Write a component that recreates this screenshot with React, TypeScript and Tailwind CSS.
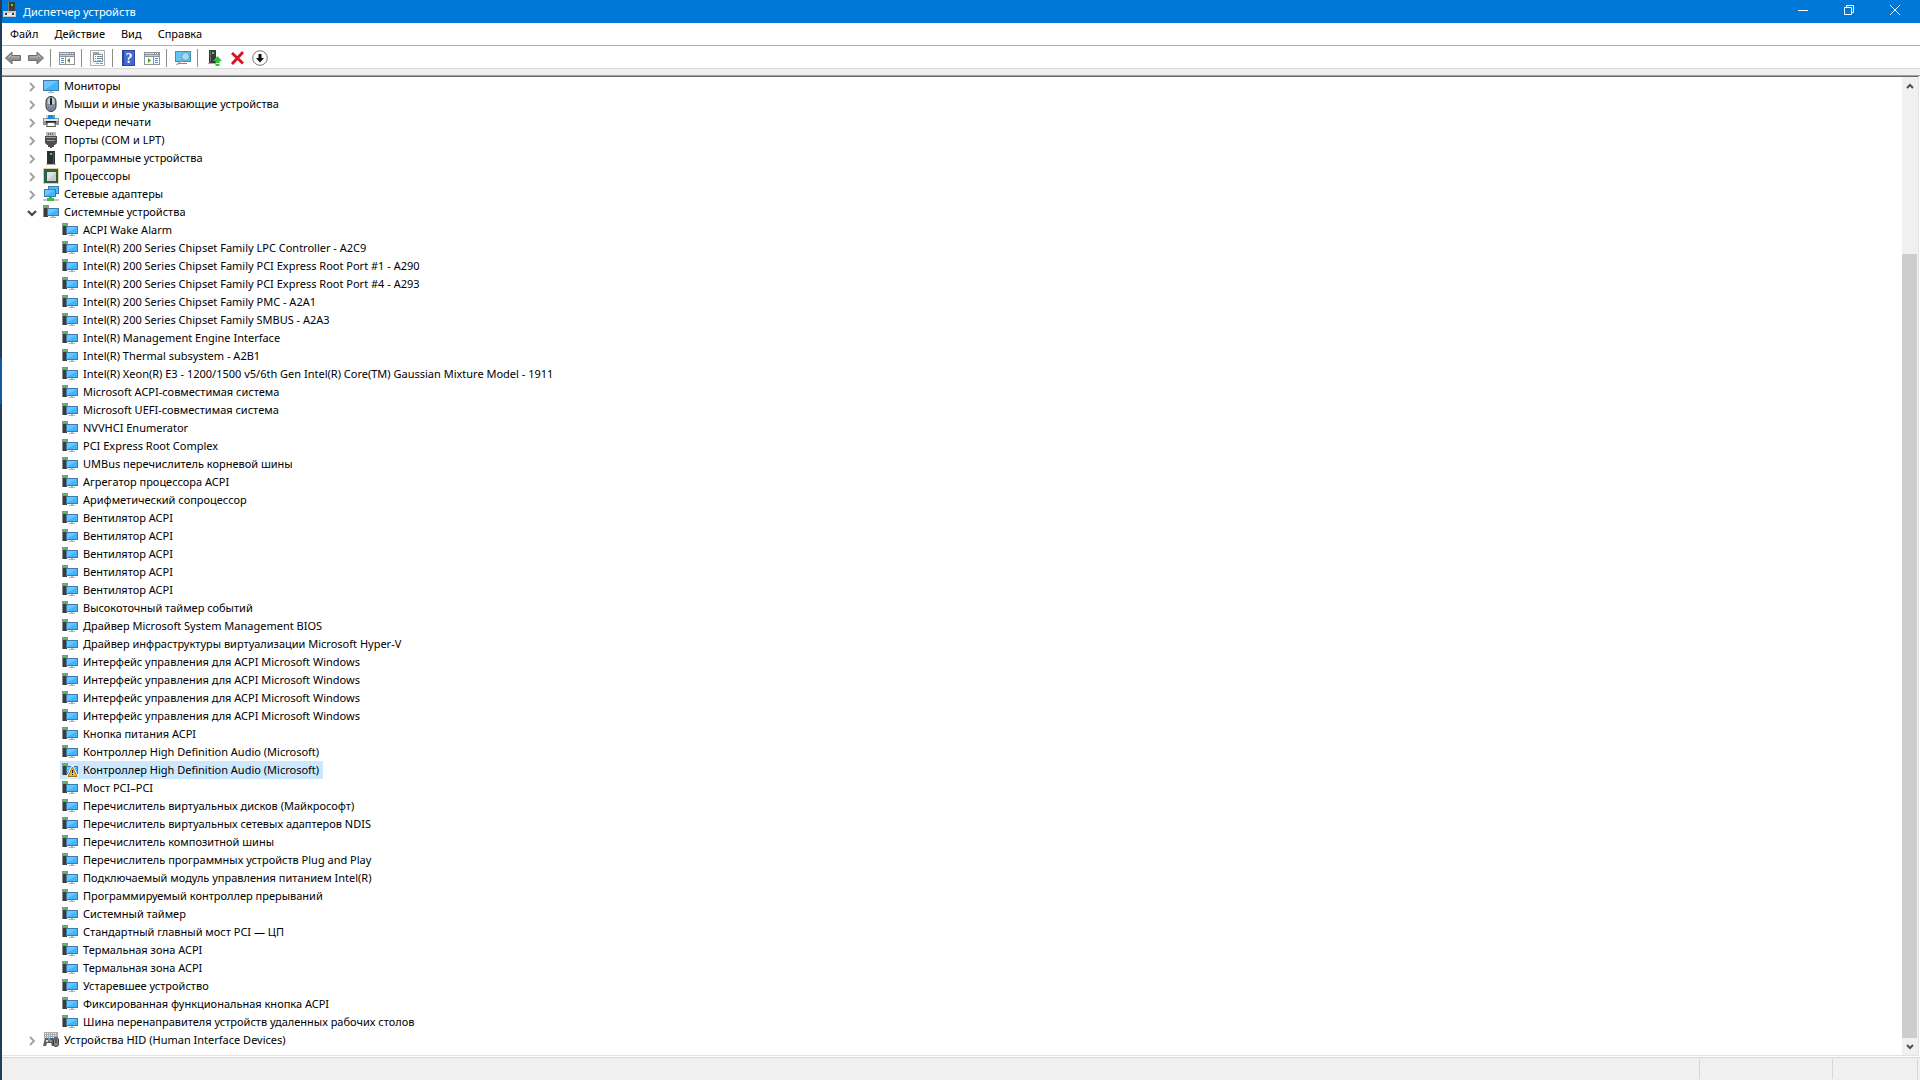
import type { ReactNode } from "react";
import clsx from "clsx";

type IconName =
  | "monitor"
  | "mouse"
  | "printer"
  | "port"
  | "software"
  | "cpu"
  | "network"
  | "system"
  | "warning"
  | "hid";

const categories: { name: string; icon: IconName }[] = [
  { name: "Мониторы", icon: "monitor" },
  { name: "Мыши и иные указывающие устройства", icon: "mouse" },
  { name: "Очереди печати", icon: "printer" },
  { name: "Порты (COM и LPT)", icon: "port" },
  { name: "Программные устройства", icon: "software" },
  { name: "Процессоры", icon: "cpu" },
  { name: "Сетевые адаптеры", icon: "network" },
];

const systemDevices = [
  "ACPI Wake Alarm",
  "Intel(R) 200 Series Chipset Family LPC Controller - A2C9",
  "Intel(R) 200 Series Chipset Family PCI Express Root Port #1 - A290",
  "Intel(R) 200 Series Chipset Family PCI Express Root Port #4 - A293",
  "Intel(R) 200 Series Chipset Family PMC - A2A1",
  "Intel(R) 200 Series Chipset Family SMBUS - A2A3",
  "Intel(R) Management Engine Interface",
  "Intel(R) Thermal subsystem - A2B1",
  "Intel(R) Xeon(R) E3 - 1200/1500 v5/6th Gen Intel(R) Core(TM) Gaussian Mixture Model - 1911",
  "Microsoft ACPI-совместимая система",
  "Microsoft UEFI-совместимая система",
  "NVVHCI Enumerator",
  "PCI Express Root Complex",
  "UMBus перечислитель корневой шины",
  "Агрегатор процессора ACPI",
  "Арифметический сопроцессор",
  "Вентилятор ACPI",
  "Вентилятор ACPI",
  "Вентилятор ACPI",
  "Вентилятор ACPI",
  "Вентилятор ACPI",
  "Высокоточный таймер событий",
  "Драйвер Microsoft System Management BIOS",
  "Драйвер инфраструктуры виртуализации Microsoft Hyper-V",
  "Интерфейс управления для ACPI Microsoft Windows",
  "Интерфейс управления для ACPI Microsoft Windows",
  "Интерфейс управления для ACPI Microsoft Windows",
  "Интерфейс управления для ACPI Microsoft Windows",
  "Кнопка питания ACPI",
  "Контроллер High Definition Audio (Microsoft)",
  "Контроллер High Definition Audio (Microsoft)",
  "Мост PCI–PCI",
  "Перечислитель виртуальных дисков (Майкрософт)",
  "Перечислитель виртуальных сетевых адаптеров NDIS",
  "Перечислитель композитной шины",
  "Перечислитель программных устройств Plug and Play",
  "Подключаемый модуль управления питанием Intel(R)",
  "Программируемый контроллер прерываний",
  "Системный таймер",
  "Стандартный главный мост PCI — ЦП",
  "Термальная зона ACPI",
  "Термальная зона ACPI",
  "Устаревшее устройство",
  "Фиксированная функциональная кнопка ACPI",
  "Шина перенаправителя устройств удаленных рабочих столов",
];

const selectedIndex = 30;

const Svg = ({ children }: { children: ReactNode }) => (
  <svg viewBox="0 0 16 16" className="size-4 shrink-0" aria-hidden="true">
    {children}
  </svg>
);

const systemShape = (
  <>
    <path d="M0 1h6v3H0z" fill="#8d9092" />
    <path d="M1 2h2v1H1z" fill="#3fe03f" />
    <path d="M0 4h5v9H0z" fill="#8d9092" />
    <path d="M1 4h3v1h1v8H1z" fill="#3a3c3e" />
    <path d="M4 4h12v8H4z" fill="#3d7ca8" />
    <path d="M5 5h10v6H5z" fill="#41b4fb" />
    <path d="M5 11l10-6H5z" fill="#6ac8ff" />
    <path d="M9 12h2v1H9zM7 13h6v1H7z" fill="#a3b4c4" />
  </>
);

const icons: Record<IconName, ReactNode> = {
  monitor: (
    <>
      <path d="M0 2h16v11H0z" fill="#3d7ca8" />
      <path d="M1 3h14v9H1z" fill="#41b4fb" />
      <path d="M1 12L15 3H1z" fill="#6ac8ff" />
      <path d="M7 13h2v1H7zM5 14h6v1H5z" fill="#a3b4c4" />
    </>
  ),
  mouse: (
    <>
      <rect x="3" y="0.5" width="10" height="15" rx="5" fill="#8592a5" stroke="#2e3136" />
      <path d="M5 3c1-1 1.5-1.5 2-1.5V8H4.5zM9 1.500c1 0 2 1 2.5 2V8H9z" fill="#c3ccd6" />
      <rect x="7" y="2" width="2" height="7" rx="1" fill="#1c2026" />
      <path d="M5 11c1 3 5 3 6 0" fill="none" stroke="#5d6878" />
    </>
  ),
  printer: (
    <>
      <path d="M3 1h4v4H3z" fill="#b8d8ee" />
      <path d="M5 1h5v4H5z" fill="#1f86e8" />
      <path d="M10 1h2v3h-2z" fill="#52c845" />
      <path d="M0 4h16v7H0z" fill="#909395" />
      <path d="M4 4h8v1H4z" fill="#1f86e8" />
      <path d="M1 5h14v2H1z" fill="#e3e4e5" />
      <path d="M3 7h10v2H3z" fill="#222" />
      <path d="M4.500 8.500h7l1 4h-9z" fill="#fff" stroke="#555" />
    </>
  ),
  port: (
    <>
      <path d="M3 0h10v5H3z" fill="#b9bbbd" />
      <path d="M5 1h1v2H5zM7 1h1v2H7zM9 1h1v2H9z" fill="#666" />
      <path d="M2 4h12v7l-2 2h-1v2H9v1H7v-1H5v-2H4l-2-2z" fill="#4c4e50" />
      <path d="M3 5h10v1H3zM4 8h8v1H4z" fill="#9d9fa1" />
    </>
  ),
  software: (
    <>
      <path d="M4 1h8v13H4z" fill="#2d2f31" />
      <path d="M10 2h1v12h-1z" fill="#505356" />
      <path d="M7 3h2v2H7z" fill="#34e83b" />
      <path d="M3 14h10v1H3z" fill="#b3b5b7" />
    </>
  ),
  cpu: (
    <>
      <rect x="0.5" y="0.5" width="15" height="15" fill="none" stroke="#c7a33c" strokeDasharray="1 1" />
      <path d="M1 1h14v14H1z" fill="#2c6147" />
      <path d="M4 4h9v9H4z" fill="#c9cccb" />
      <path d="M4 13l9-9H4z" fill="#e0e2e1" />
    </>
  ),
  network: (
    <>
      <path d="M5 0h11v8H5z" fill="#3d7ca8" />
      <path d="M6 1h9v6H6z" fill="#4fbcfb" />
      <path d="M1 3h12v8H1z" fill="#3d7ca8" />
      <path d="M2 4h10v6H2z" fill="#41b4fb" />
      <path d="M2 10l10-6H2z" fill="#6ac8ff" />
      <path d="M0 13h16v2H0z" fill="#c5c9cb" />
      <path d="M6 11h3v1h2v3H4v-3h2z" fill="#3ebb43" />
    </>
  ),
  system: systemShape,
  warning: (
    <>
      {systemShape}
      <path d="M10.500 3L16 15H5z" fill="#fff" stroke="#fff" strokeLinejoin="round" />
      <path d="M10.500 5l4.500 9.500H6z" fill="#f7b944" stroke="#a86d10" strokeLinejoin="round" />
      <path d="M10 8h1v3h-1zM10 12h1v1h-1z" fill="#111" />
    </>
  ),
  hid: (
    <>
      <path d="M1 0h14v7H1z" fill="#a9acae" />
      <path d="M2 1.500h12M2 3.500h12M2 5.500h12" stroke="#eee" strokeDasharray="1 1" />
      <path d="M2 6h8l2 8h-3l-1-3H4l-1 3H0z" fill="#5b5e61" />
      <path d="M3 8h2v2H3z" fill="#d8dadb" />
      <path d="M5 6h2v3H5z" fill="#3da3ee" />
      <path d="M7 8h2v2H7z" fill="#e67a35" />
      <rect x="10.5" y="5.5" width="5" height="9" rx="2.5" fill="#85898d" stroke="#3c3f42" />
      <path d="M12.500 7h1v4h-1z" fill="#222" />
    </>
  ),
};

const Chevron = ({ open }: { open?: boolean }) => (
  <svg viewBox="0 0 12 12" className="size-3" fill="none" aria-hidden="true">
    {open ? (
      <path d="M2 4l4 4 4-4" stroke="#404040" strokeWidth="2" />
    ) : (
      <path d="M4 2l4 4-4 4" stroke="#a0a0a0" strokeWidth="1.8" />
    )}
  </svg>
);

const Label = ({ name, icon, selected }: { name: string; icon: IconName; selected?: boolean }) => (
  <span className={clsx("flex h-full items-center pr-1 pl-0.5", selected && "bg-[#cce8ff]")}>
    <Svg>{icons[icon]}</Svg>
    <span className="pl-[5px] leading-4 whitespace-nowrap">{name}</span>
  </span>
);

const Category = ({ name, icon, open }: { name: string; icon: IconName; open?: boolean }) => (
  <div className="flex h-[18px] items-center">
    <button type="button" aria-label={name} aria-expanded={!!open} className="mr-[3px] flex h-full w-3 items-end pb-0.5">
      <Chevron open={open} />
    </button>
    <Label name={name} icon={icon} />
  </div>
);

const ToolButton = ({ label, children }: { label: string; children: ReactNode }) => (
  <button type="button" aria-label={label} className="flex h-full w-[23px] items-center pl-[3px]">
    <Svg>{children}</Svg>
  </button>
);

const Separator = () => <span className="mr-[5px] ml-0.5 h-[18px] w-px bg-[#8d8d8d]" />;

const arrowShape = "M0.500 8L7 2v3.500h8.500v5H7V14z";

const Toolbar = () => (
  <div className="box-content flex h-5 shrink-0 items-center border-b border-[#d9d9d9] bg-white pt-0.5">
    <ToolButton label="Назад">
      <path d={arrowShape} fill="#8f8f8f" stroke="#6b6b6b" />
      <path d="M3 8l3-3v2h8" fill="none" stroke="#bcbcbc" />
    </ToolButton>
    <ToolButton label="Вперед">
      <g transform="matrix(-1 0 0 1 16 0)">
        <path d={arrowShape} fill="#8f8f8f" stroke="#6b6b6b" />
        <path d="M3 8l3-3v2h8" fill="none" stroke="#bcbcbc" />
      </g>
    </ToolButton>
    <Separator />
    <ToolButton label="Показать или скрыть дерево консоли">
      <path d="M0 2h16v13H0z" fill="#8c949b" />
      <path d="M1 3h9v1H1z" fill="#d8dde1" />
      <path d="M11 3h1v1h-1zM13 3h1v1h-1z" fill="#fff" />
      <path d="M1 5h14v1H1z" fill="#c5cbd0" />
      <path d="M1 7h5v7H1zM7 7h8v7H7z" fill="#fff" />
      <path d="M2 8h3v1H2zM2 10h3v1H2zM2 12h3v1H2z" fill="#5b8dc4" />
      <path d="M8 10.500L11 8v5z" fill="#35a52c" />
    </ToolButton>
    <Separator />
    <ToolButton label="Свойства">
      <path d="M0.500 0.500h14v15h-14z" fill="#fff" stroke="#a8adb1" />
      <path d="M2 2h11v12H2z" fill="#eceff1" />
      <path d="M3.500 4.500h9v7h-9z" fill="#fff" stroke="#8c949b" />
      <path d="M3 2h6v2H3z" fill="#9da5ab" />
      <path d="M5 6h1v1H5zM7 6h5v1H7zM5 8h1v1H5zM7 8h5v1H7z" fill="#7b848b" />
      <path d="M5 10h1v1H5zM7 10h4v1H7zM6 13h3v1H6z" fill="#47c5ee" />
      <path d="M10 13h3v1h-3z" fill="#8c949b" />
    </ToolButton>
    <Separator />
    <ToolButton label="Справка">
      <path d="M1 0h13v16H1z" fill="#2b479c" />
      <path d="M3 1h10v14H3z" fill="#4668cf" />
      <text x="8" y="13" textAnchor="middle" fontSize="14" fontWeight="700" fontFamily="Liberation Serif, serif" fill="#fff">
        ?
      </text>
    </ToolButton>
    <ToolButton label="Показать область действий">
      <path d="M0 2h16v13H0z" fill="#8c949b" />
      <path d="M1 3h9v1H1z" fill="#d8dde1" />
      <path d="M11 3h1v1h-1zM13 3h1v1h-1z" fill="#fff" />
      <path d="M1 5h14v1H1z" fill="#c5cbd0" />
      <path d="M1 7h8v7H1zM10 7h5v7h-5z" fill="#fff" />
      <path d="M11 8h3v1h-3zM11 10h3v1h-3zM11 12h3v1h-3z" fill="#5b8dc4" />
      <path d="M7 10.500L4 8v5z" fill="#35a52c" />
    </ToolButton>
    <Separator />
    <ToolButton label="Обновить конфигурацию оборудования">
      <path d="M0 1h16v11H0z" fill="#3d8fb8" />
      <path d="M1 2h14v9H1z" fill="#63c5f2" />
      <path d="M4 13h8v1H4z" fill="#4f93b5" />
      <circle cx="10.5" cy="6.5" r="4" fill="#a5dcf5" stroke="#6b93a8" />
      <path d="M7.500 9.500L1.500 15" stroke="#8fa3b0" strokeWidth="1.5" />
    </ToolButton>
    <Separator />
    <ToolButton label="Обновить драйвер">
      <path d="M3 0h7v13H3z" fill="#38393b" />
      <path d="M4 1h1v11H4z" fill="#66686a" />
      <path d="M6 2h2v2H6z" fill="#34e83b" />
      <path d="M2 13h8v1H2z" fill="#aaa" />
      <path d="M11.500 6L16 11h-2.500v2h-4v-2H7z" fill="#2fc036" />
      <path d="M9.500 14h4v2h-4z" fill="#2fc036" />
    </ToolButton>
    <ToolButton label="Удалить устройство">
      <path d="M3 3l11 10.500M14 2L3 14" stroke="#dc1020" strokeWidth="2.8" />
    </ToolButton>
    <ToolButton label="Отключить устройство">
      <circle cx="8" cy="8" r="7.3" fill="#fff" stroke="#777" />
      <path d="M6.500 4h3v4H12l-4 4.500L4 8h2.500z" fill="#111" />
    </ToolButton>
  </div>
);

const WindowButton = ({ label, d }: { label: string; d: string }) => (
  <button type="button" aria-label={label} className="flex h-full w-[46px] items-start justify-center pt-[5px]">
    <svg viewBox="0 0 10 10" className="size-2.5" fill="none" stroke="#fff" aria-hidden="true">
      <path d={d} />
    </svg>
  </button>
);

const TitleBar = () => (
  <header className="flex h-[23px] shrink-0 items-center bg-[#0078d7] pr-0.5 text-white">
    <svg viewBox="0 0 14 16" className="mb-1 ml-px h-4 w-3.5" aria-hidden="true">
      <path d="M5 0h7v10H5z" fill="#3a3c3e" />
      <path d="M5 0h1v10H5z" fill="#7b7e80" />
      <path d="M8 2h2v2H8z" fill="#34e83b" />
      <path d="M0 9h13v6H0z" fill="#c4c7c9" />
      <path d="M1 11h11v3H1z" fill="#e9eaeb" />
      <path d="M2 11h2v2H2zM9 11h2v2H9z" fill="#333" />
    </svg>
    <h1 className="flex-1 pl-1.5">Диспетчер устройств</h1>
    <WindowButton label="Свернуть" d="M0 5.500h10" />
    <WindowButton label="Восстановить" d="M0.500 2.500h7v7h-7zM2.500 2.500v-2h7v7h-2" />
    <WindowButton label="Закрыть" d="M0 0l10 10M10 0L0 10" />
  </header>
);

const ScrollArrow = ({ label, d }: { label: string; d: string }) => (
  <button type="button" aria-label={label} className="flex h-[17px] w-full items-center justify-center">
    <svg viewBox="0 0 8 8" className="size-2" fill="none" stroke="#505050" strokeWidth="2" aria-hidden="true">
      <path d={d} />
    </svg>
  </button>
);

export default function App() {
  return (
    <div className="flex h-screen overflow-hidden bg-white font-['Noto_Sans',sans-serif] text-[11px] leading-4 text-black">
      <div className="flex w-0.5 shrink-0 flex-col bg-[#1e3f5a]">
        <span className="mt-[358px] h-[46px] bg-[#0f5a9f]" />
      </div>
      <div className="flex min-w-0 flex-1 flex-col">
        <TitleBar />
        <nav className="flex h-[23px] shrink-0 items-center border-b border-[#b0b0b8]">
          {["Файл", "Действие", "Вид", "Справка"].map((item) => (
            <button key={item} type="button" className="h-full px-2">
              {item}
            </button>
          ))}
        </nav>
        <Toolbar />
        <div className="h-[7px] shrink-0 border-b border-[#a0a0a0] bg-[#f0f0f0]" />

        <main className="mr-px flex min-h-0 flex-1 border-t border-r border-b border-t-[#696969] border-r-[#e3e3e3] border-b-[#e3e3e3]">
          <ul className="min-w-0 flex-1 overflow-hidden pl-6">
            {categories.map((category) => (
              <li key={category.name}>
                <Category {...category} />
              </li>
            ))}
            <li>
              <Category name="Системные устройства" icon="system" open />
              <ul className="pl-[34px]">
                {systemDevices.map((name, idx) => (
                  <li key={idx} className="flex h-[18px]">
                    <Label
                      name={name}
                      icon={idx === selectedIndex ? "warning" : "system"}
                      selected={idx === selectedIndex}
                    />
                  </li>
                ))}
              </ul>
            </li>
            <li>
              <Category name="Устройства HID (Human Interface Devices)" icon="hid" />
            </li>
          </ul>
          <div className="flex w-4 shrink-0 flex-col bg-[#f0f0f0]">
            <ScrollArrow label="Вверх" d="M1 6l3-3 3 3" />
            <div className="flex flex-1 flex-col pt-[160px] pr-px">
              <div className="flex-1 bg-[#cdcdcd]" />
            </div>
            <ScrollArrow label="Вниз" d="M1 2l3 3 3-3" />
          </div>
        </main>

        <footer className="mt-px flex h-[23px] shrink-0 justify-end border-t border-[#d7d7d7] bg-[#f0f0f0] py-px pr-0.5">
          <span className="w-[133px] border-l border-[#d7d7d7]" />
          <span className="w-[86px] border-x border-[#d7d7d7]" />
        </footer>
      </div>
    </div>
  );
}
